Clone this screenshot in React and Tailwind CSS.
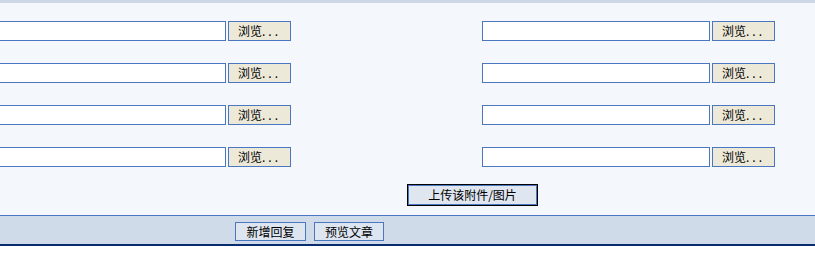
import { Fragment } from 'react'

const font = { fontFamily: '"Noto Sans CJK SC", "Liberation Sans", sans-serif' }

function FileRow() {
	return (
		<div className="flex items-center h-[20px]">
			<input type="text" className="w-[228px] h-[20px] bg-white border border-[#4a77bf] outline-none" readOnly />
			<button className="ml-[2px] w-[63px] h-[20px] bg-[#ece9d8] border border-[#4a77bf] text-[12px] leading-none text-black text-left pl-[9px]">
				浏览<span className="tracking-[3px]">...</span>
			</button>
		</div>
	)
}

export default function App() {
	const rows = [0, 1, 2, 3]
	return (
		<div className="w-[815px] h-[255px] bg-white overflow-hidden" style={font}>
			<div className="h-[3px] bg-[#cdd7e6]" />
			<div className="bg-[#f4f7fc] h-[212px] pt-[18px]">
				<div className="grid grid-cols-[484px_1fr] gap-y-[22px] ml-[-2px]">
					{rows.map(r => (
						<Fragment key={r}>
							<FileRow />
							<FileRow />
						</Fragment>
					))}
				</div>
				<div className="flex mt-[17px] pl-[407px]">
					<button className="w-[131px] h-[22px] bg-[#dfe6f0] border border-black shadow-[inset_0_0_0_1px_#4a77bf] text-[12px] leading-none text-black">
						上传该附件/图片
					</button>
				</div>
			</div>
			<div className="h-[31px] bg-[#cfdbe8] border-t border-[#4a77bf] border-b-2 border-b-[#0b2d6e] pt-[6px] pl-[235px] flex items-start gap-[8px]">
				<button className="w-[71px] h-[19px] bg-[#dde5f0] border border-[#4a77bf] text-[12px] leading-none text-black">新增回复</button>
				<button className="w-[70px] h-[19px] bg-[#dde5f0] border border-[#4a77bf] text-[12px] leading-none text-black">预览文章</button>
			</div>
		</div>
	)
}
